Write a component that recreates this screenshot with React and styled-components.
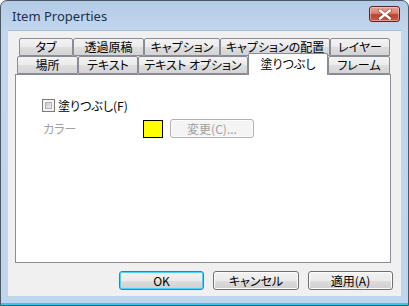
import React from "react";
import styled, { createGlobalStyle } from "styled-components";

const GlobalStyle = createGlobalStyle`
  body {
    margin: 0;
    background: #ffffff;
  }
  * {
    box-sizing: border-box;
  }
`;

const jp = `"Noto Sans CJK JP", "Noto Sans", sans-serif`;

const Window = styled.div`
  width: 409px;
  height: 306px;
  display: flex;
  flex-direction: column;
  border: 1px solid #4b5866;
  border-radius: 7px 7px 0 0;
  background: linear-gradient(to bottom, #b4cbe6 0px, #c2d7ee 30px, #c0d5ec 100%);
  box-shadow: inset 0 -2px 0 #33c7e8;
  font-family: ${jp};
  font-feature-settings: "palt";
  font-size: 12px;
`;

const TitleBar = styled.div`
  height: 29px;
  display: flex;
  align-items: center;
  justify-content: space-between;
  padding: 0 8px 0 11px;
`;

const Title = styled.span`
  font-family: "Noto Sans", "Liberation Sans", sans-serif;
  font-size: 13px;
  color: #1c2f4a;
  margin-top: 1px;
`;

const CloseButton = styled.div`
  width: 31px;
  height: 16px;
  margin-top: -3px;
  border: 1px solid #5b2420;
  border-radius: 3px;
  background: linear-gradient(to bottom, #e8a496 0%, #d8806e 45%, #c1412c 55%, #c9594a 100%);
  box-shadow: inset 0 0 0 1px rgba(255, 210, 200, 0.55);
  display: flex;
  align-items: center;
  justify-content: center;
`;

const Client = styled.div`
  flex: 1;
  margin: 0 7px 9px 7px;
  background: #f0f0f0;
  border-top: 1px solid #a9bdd4;
  display: flex;
  flex-direction: column;
  padding: 7px 10px 6px 7px;
`;

const TabRow = styled.div`
  display: flex;
  height: 18px;
  padding-left: ${(p) => p.$indent}px;
  position: relative;
  z-index: ${(p) => (p.$front ? 2 : 1)};
`;

const Tab = styled.div`
  width: ${(p) => p.$w}px;
  height: ${(p) => (p.$active ? 22 : 18)}px;
  margin-top: ${(p) => (p.$active ? -3 : 0)}px;
  border: 1px solid #898c95;
  border-bottom: ${(p) => (p.$active ? "none" : "1px solid #898c95")};
  border-radius: 2px 2px 0 0;
  background: ${(p) =>
    p.$active
      ? "#ffffff"
      : "linear-gradient(to bottom, #f3f3f3 0%, #ebebeb 50%, #dedede 51%, #d4d4d4 100%)"};
  display: flex;
  align-items: ${(p) => (p.$active ? "flex-start" : "center")};
  justify-content: center;
  padding-top: ${(p) => (p.$active ? 4 : 0)}px;
  color: #000;
  white-space: nowrap;
  line-height: 1;
  position: relative;
  z-index: ${(p) => (p.$active ? 3 : 1)};
`;

const Page = styled.div`
  height: 189px;
  border: 1px solid #898c95;
  background: #ffffff;
  padding: 24px 0 0 26px;
  display: flex;
  flex-direction: column;
  gap: 7px;
`;

const CheckRow = styled.label`
  display: flex;
  align-items: center;
  gap: 3px;
  height: 13px;
  color: #000;
`;

const CheckBox = styled.span`
  width: 13px;
  height: 13px;
  border: 1px solid #7a7a7a;
  background: #f4f4f4;
  display: flex;
  padding: 2px;
  &::after {
    content: "";
    flex: 1;
    border: 1px solid #b4b4b4;
    background: linear-gradient(135deg, #c4c8ce, #f0f0f0);
  }
`;

const ColorRow = styled.div`
  display: flex;
  align-items: center;
  margin-left: 1px;
`;

const DimLabel = styled.span`
  width: 100px;
  color: #a0a0a0;
`;

const Swatch = styled.span`
  width: 20px;
  height: 18px;
  border: 1px solid #000;
  background: ${(p) => p.$color};
  margin-right: 7px;
`;

const Button = styled.button`
  width: ${(p) => p.$w}px;
  height: 19px;
  padding: 0;
  font-family: ${jp};
  font-feature-settings: "palt";
  font-size: 12px;
  line-height: 1;
  border-radius: 3px;
  border: 1px solid ${(p) => (p.$default ? "#3c7fb1" : p.disabled ? "#adb2b5" : "#707070")};
  color: ${(p) => (p.disabled ? "#a0a0a0" : "#000")};
  background: ${(p) =>
    p.disabled
      ? "#f4f4f4"
      : "linear-gradient(to bottom, #f2f2f2 0%, #ebebeb 50%, #dddddd 51%, #cfcfcf 100%)"};
  box-shadow: ${(p) =>
    p.$default ? "inset 0 0 0 1px #48d4f8" : "inset 0 0 0 1px #fcfcfc"};
`;

const Footer = styled.div`
  margin-top: auto;
  display: flex;
  justify-content: flex-end;
  gap: 9px;
  margin-right: -2px;
`;

const CloseIcon = () => (
  <svg width="14" height="11" viewBox="0 0 14 11">
    <path
      d="M2 1.5 L12 9.5 M12 1.5 L2 9.5"
      stroke="#5a2a24"
      strokeWidth="4"
      strokeLinecap="round"
      opacity="0.5"
    />
    <path
      d="M2 1.5 L12 9.5 M12 1.5 L2 9.5"
      stroke="#ffffff"
      strokeWidth="2.4"
      strokeLinecap="round"
    />
  </svg>
);

const backTabs = [
  { label: "タブ", w: 54 },
  { label: "透過原稿", w: 71 },
  { label: "キャプション", w: 76 },
  { label: "キャプションの配置", w: 110 },
  { label: "レイヤー", w: 60 },
];

const frontTabs = [
  { label: "場所", w: 61 },
  { label: "テキスト", w: 60 },
  { label: "テキスト オプション", w: 110 },
  { label: "塗りつぶし", w: 80, active: true },
  { label: "フレーム", w: 62 },
];

const App = () => {
  return (
    <>
      <GlobalStyle />
      <Window>
        <TitleBar>
          <Title>Item Properties</Title>
          <CloseButton>
            <CloseIcon />
          </CloseButton>
        </TitleBar>
        <Client>
          <TabRow $indent={4}>
            {backTabs.map((t) => (
              <Tab key={t.label} $w={t.w}>
                {t.label}
              </Tab>
            ))}
          </TabRow>
          <TabRow $indent={2} $front>
            {frontTabs.map((t) => (
              <Tab key={t.label} $w={t.w} $active={t.active}>
                {t.label}
              </Tab>
            ))}
          </TabRow>
          <Page>
            <CheckRow>
              <CheckBox />
              塗りつぶし(F)
            </CheckRow>
            <ColorRow>
              <DimLabel>カラー</DimLabel>
              <Swatch $color="#ffff00" />
              <Button $w={84} disabled>
                変更(C)...
              </Button>
            </ColorRow>
          </Page>
          <Footer>
            <Button $w={85} $default>
              OK
            </Button>
            <Button $w={86}>キャンセル</Button>
            <Button $w={85}>適用(A)</Button>
          </Footer>
        </Client>
      </Window>
    </>
  );
};

export default App;
